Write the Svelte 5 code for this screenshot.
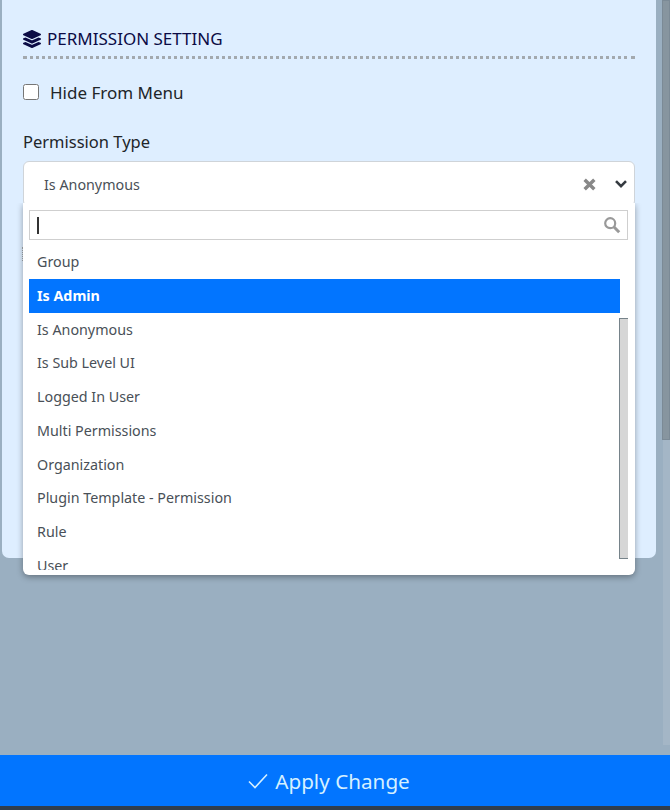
<script>
  let options = ['Group', 'Is Admin', 'Is Anonymous', 'Is Sub Level UI', 'Logged In User', 'Multi Permissions', 'Organization', 'Plugin Template - Permission', 'Rule', 'User'];
  let highlighted = 'Is Admin';
</script>

<div class="page">
  <div class="main">
    <div class="panel">
      <h3 class="section-title">
        <svg class="layers" viewBox="0 0 512 512" width="18" height="18" aria-hidden="true">
          <path fill="currentColor" d="M12.41 148.02l232.94 105.67c6.8 3.09 14.49 3.09 21.29 0l232.94-105.67c16.55-7.51 16.55-32.52 0-40.03L266.65 2.31a25.607 25.607 0 0 0-21.29 0L12.41 107.98c-16.55 7.51-16.55 32.53 0 40.04zm487.18 88.28l-58.09-26.33-161.64 73.27c-7.56 3.43-15.59 5.17-23.86 5.17s-16.29-1.74-23.86-5.17L70.51 209.97l-58.1 26.33c-16.55 7.5-16.55 32.5 0 40l232.94 105.59c6.8 3.08 14.49 3.08 21.29 0L499.59 276.3c16.55-7.5 16.55-32.5 0-40zm0 127.8l-57.87-26.23-161.86 73.37c-7.56 3.43-15.59 5.17-23.86 5.17s-16.29-1.74-23.86-5.17L70.29 337.87 12.41 364.1c-16.55 7.5-16.55 32.5 0 40l232.94 105.59c6.8 3.08 14.49 3.08 21.29 0L499.59 404.1c16.55-7.5 16.55-32.5 0-40z"/>
        </svg>
        PERMISSION SETTING
      </h3>

      <label class="check-row">
        <input type="checkbox" />
        <span>Hide From Menu</span>
      </label>

      <div class="field-label">Permission Type</div>

      <div class="select">
        <div class="select-head">
          <span class="select-value">Is Anonymous</span>
          <svg class="clear" viewBox="0 0 14 14" width="15" height="15" aria-hidden="true">
            <path d="M2.5 2.5l9 9M11.5 2.5l-9 9" stroke="currentColor" stroke-width="3.2" fill="none" />
          </svg>
          <svg class="chevron" viewBox="0 0 14 10" width="14" height="10" aria-hidden="true">
            <path d="M2 2.2l5 5 5-5" stroke="currentColor" stroke-width="2.6" fill="none" />
          </svg>
        </div>

        <span class="peek-dots"></span>

        <div class="dropdown">
          <div class="search">
            <span class="caret"></span>
            <svg class="search-icon" viewBox="0 0 18 18" width="18" height="18" aria-hidden="true">
              <circle cx="7.2" cy="7.2" r="5" stroke="currentColor" stroke-width="2.2" fill="none" />
              <path d="M11 11l5.2 5.2" stroke="currentColor" stroke-width="3" fill="none" />
            </svg>
          </div>
          <div class="list">
            <ul>
              {#each options as option}
                <li class:active={option === highlighted}>{option}</li>
              {/each}
            </ul>
            <div class="thumb"></div>
          </div>
        </div>
      </div>
    </div>
    <div class="page-track"></div>
    <div class="page-scroll"></div>
  </div>

  <button class="apply">
    <svg viewBox="0 0 22 18" width="22" height="18" aria-hidden="true">
      <path d="M2 9.5l6 6L20 2.5" stroke="currentColor" stroke-width="1.6" fill="none" />
    </svg>
    Apply Change
  </button>
  <div class="bottom-strip"></div>
</div>

<style>
  :global(body) {
    margin: 0;
    background: #9aafc1;
  }

  .page {
    display: flex;
    flex-direction: column;
    width: 670px;
    height: 810px;
    overflow: hidden;
    font-family: "Noto Sans", "Open Sans", sans-serif;
    color: #212529;
  }

  .main {
    flex: 1;
    position: relative;
    padding-left: 2px;
    box-sizing: border-box;
  }

  .panel {
    width: 654px;
    height: 558px;
    box-sizing: border-box;
    padding: 28px 21px 0 21px;
    background: #deeeff;
    border-radius: 0 0 7px 7px;
  }

  .section-title {
    display: flex;
    align-items: center;
    gap: 6px;
    margin: 0;
    padding-bottom: 6px;
    border-bottom: 3px dotted #a3a9ae;
    font-size: 17px;
    font-weight: 400;
    line-height: 22px;
    color: #0b0b45;
  }

  .layers {
    color: #0b0b45;
  }

  .check-row {
    display: flex;
    align-items: center;
    gap: 11px;
    margin-top: 22px;
    font-size: 17px;
    line-height: 24px;
  }

  .check-row input {
    width: 16px;
    height: 16px;
    margin: 0 0 3px 0;
  }

  .field-label {
    margin-top: 25px;
    font-size: 16.5px;
    line-height: 24px;
  }

  .select {
    position: relative;
    margin-top: 7px;
    height: 46px;
    background: #fff;
    border: 1px solid #cfd4d9;
    border-radius: 6px;
    box-sizing: border-box;
  }

  .select-head {
    display: flex;
    align-items: center;
    height: 44px;
    padding: 0 6px 0 20px;
    font-size: 14.3px;
    color: #495057;
  }

  .select-value {
    flex: 1;
  }

  .clear {
    color: #888;
    margin-right: 17px;
  }

  .chevron {
    color: #343a40;
  }

  .peek-dots {
    position: absolute;
    top: 85px;
    left: -2px;
    height: 14px;
    border-left: 1px dotted #a3a9ae;
  }

  .dropdown {
    position: absolute;
    top: 41px;
    left: -1px;
    right: -1px;
    height: 372px;
    box-sizing: border-box;
    padding: 7px 7px 0 6px;
    background: #fff;
    border-radius: 0 0 6px 6px;
    box-shadow: 0 2px 6px rgba(0, 0, 0, 0.35);
    clip-path: inset(0 -10px -10px -10px);
  }

  .search {
    display: flex;
    align-items: center;
    justify-content: space-between;
    height: 30px;
    padding: 0 6px 0 7px;
    box-sizing: border-box;
    border: 1px solid #cfcfcf;
  }

  .caret {
    width: 2px;
    height: 17px;
    background: #333;
  }

  .search-icon {
    color: #999;
  }

  .list {
    position: relative;
    height: 330px;
    overflow: hidden;
  }

  ul {
    list-style: none;
    margin: 5px 8px 0 0;
    padding: 0;
  }

  li {
    height: 33.75px;
    line-height: 33px;
    padding-left: 8px;
    font-size: 14.3px;
    color: #495057;
  }

  li.active {
    background: #0275ff;
    color: #fff;
    font-weight: 700;
  }

  .thumb {
    position: absolute;
    top: 78px;
    right: -1px;
    width: 10px;
    height: 241px;
    box-sizing: border-box;
    background: #d6d6d6;
    border: 1px solid #76838a;
  }

  .page-track {
    position: absolute;
    top: 440px;
    right: 0;
    width: 7px;
    height: 305px;
    background: #a4b6c6;
  }

  .page-scroll {
    position: absolute;
    top: 0;
    right: 0;
    width: 8px;
    height: 440px;
    background: #87959f;
    border: 1px solid #7b8a96;
    box-sizing: border-box;
  }

  .apply {
    display: flex;
    align-items: center;
    justify-content: center;
    gap: 6px;
    height: 51px;
    flex-shrink: 0;
    padding: 1px 13px 0 0;
    border: none;
    background: #0275ff;
    color: #d5f0ff;
    font-family: inherit;
    font-size: 20.7px;
  }

  .bottom-strip {
    height: 4px;
    flex-shrink: 0;
    background: #303e4e;
  }
</style>
